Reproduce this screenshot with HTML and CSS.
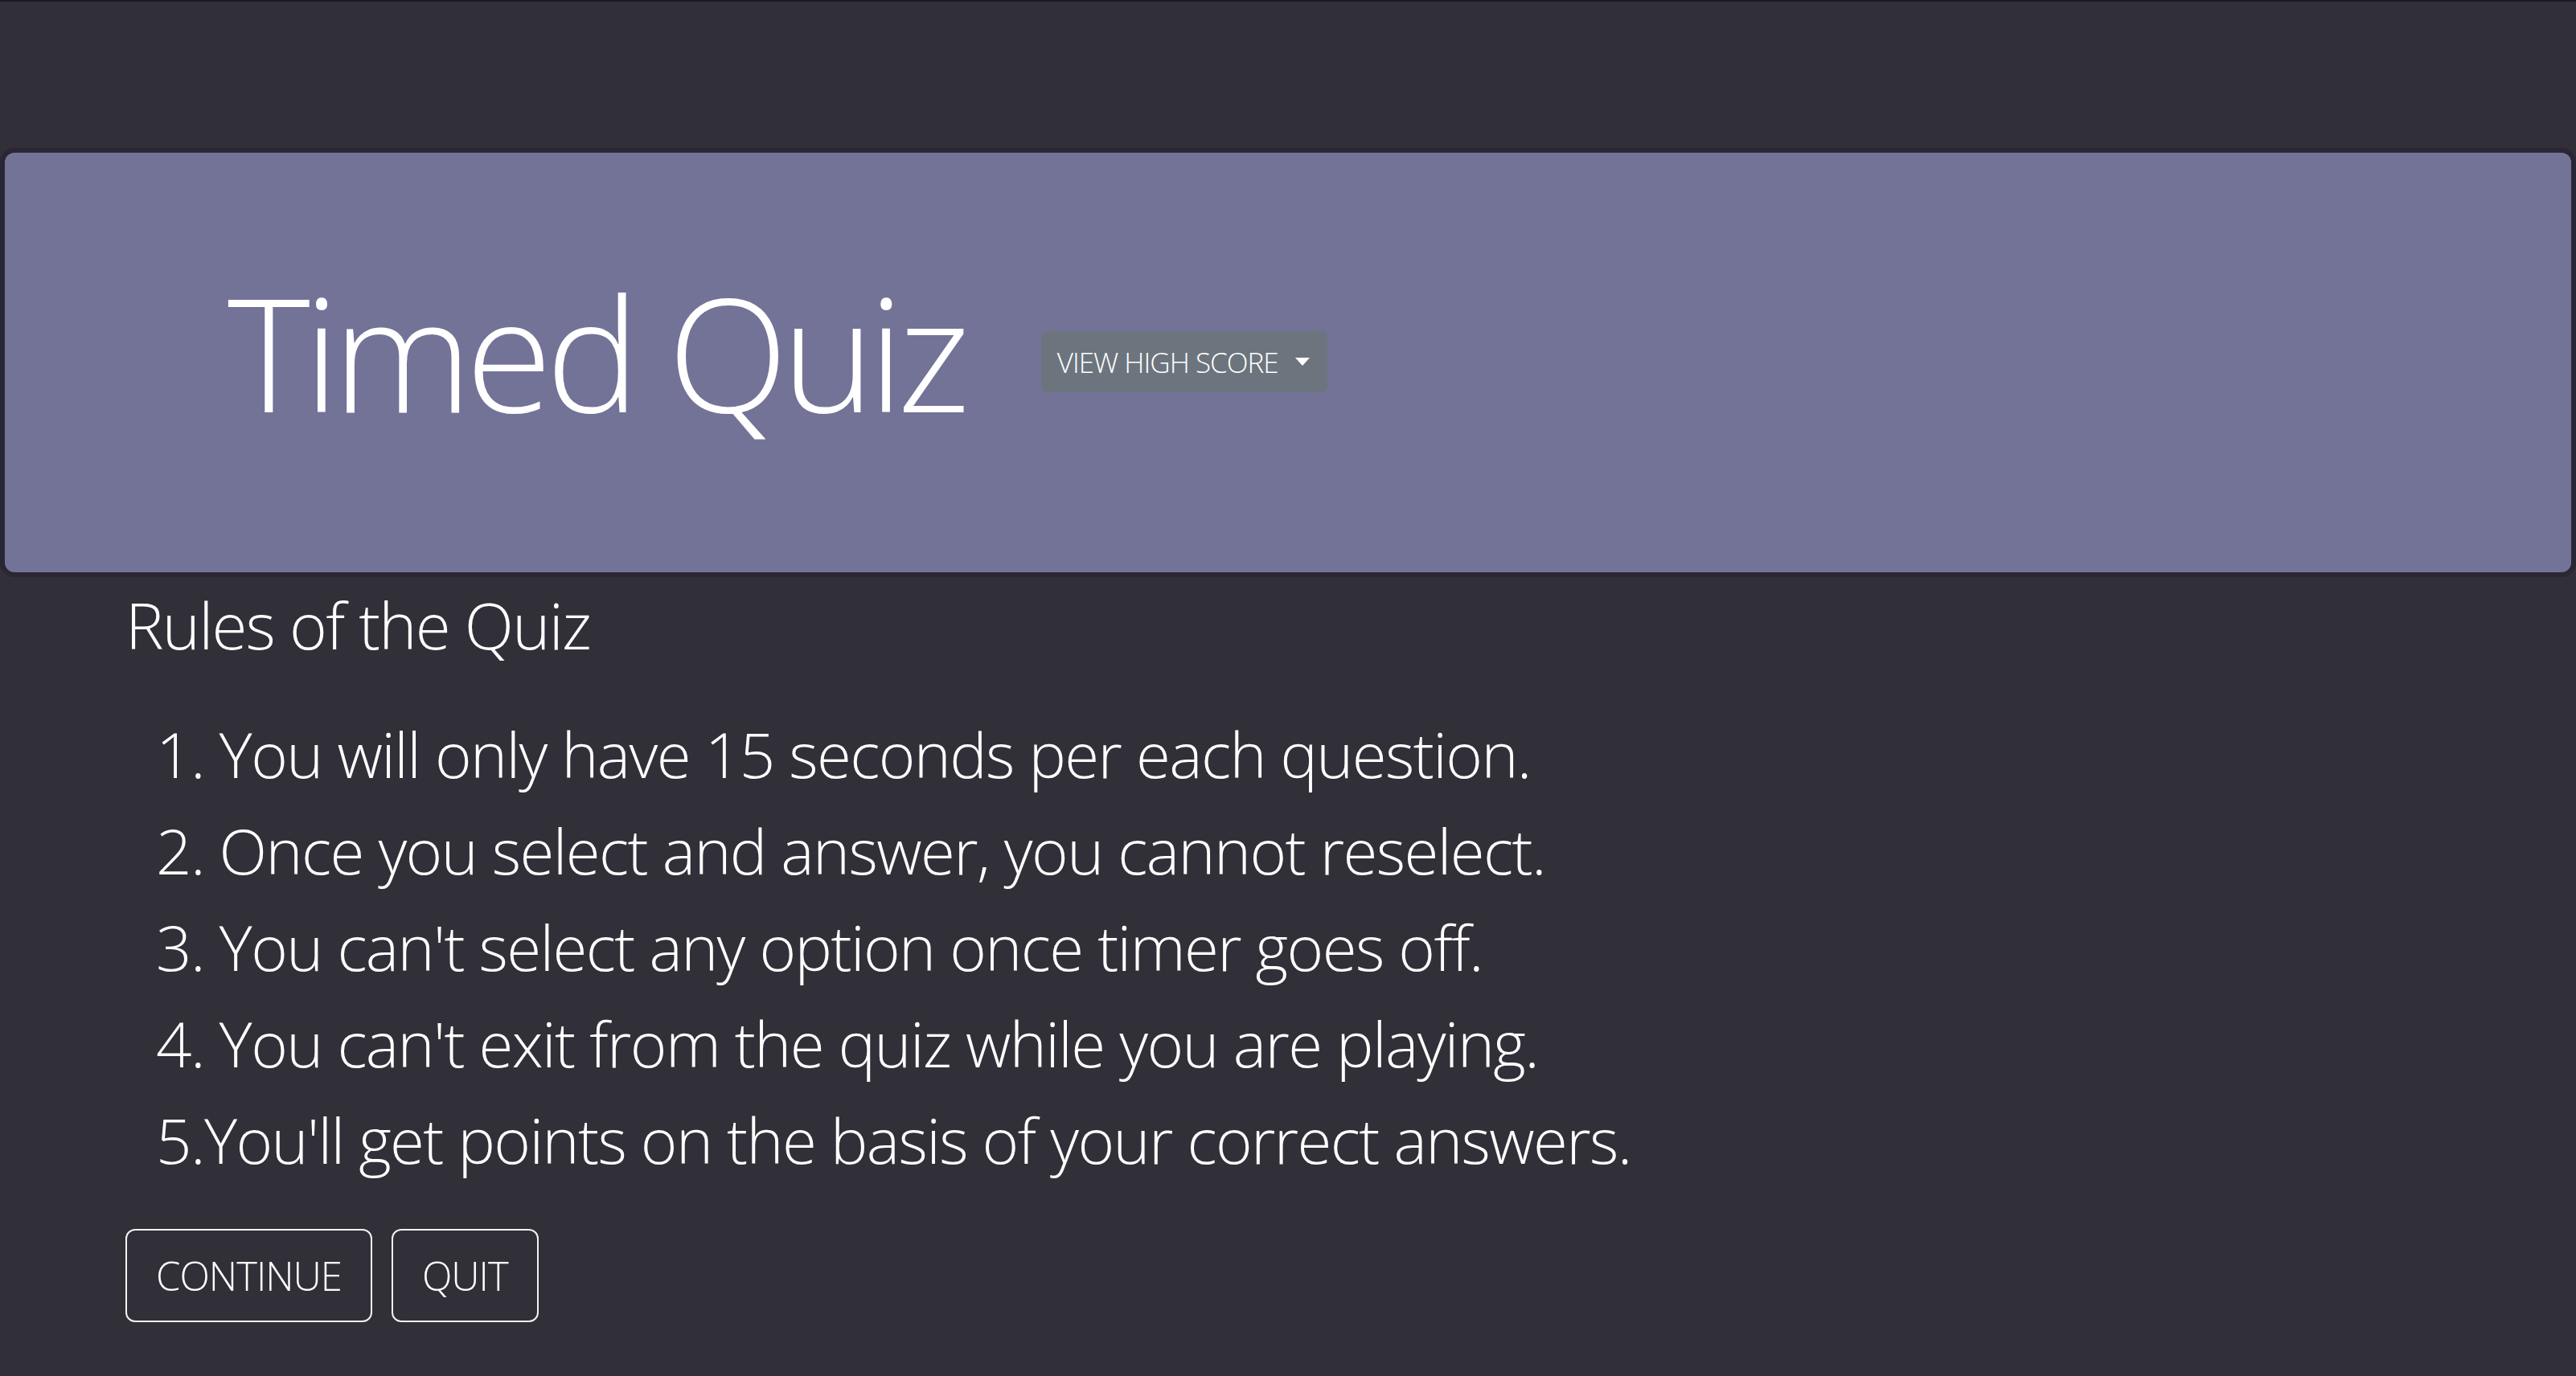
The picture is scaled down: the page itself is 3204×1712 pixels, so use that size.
FILE: index.html
```html
<!DOCTYPE html>
<html lang="en">
<head>
<meta charset="utf-8">
<title>Timed Quiz</title>
<link rel="stylesheet" href="styles.css">
</head>
<body>
<header class="jumbotron">
  <h1 class="title">Timed Quiz</h1>
  <button class="btn-score" type="button">VIEW HIGH SCORE<span class="caret"></span></button>
</header>
<main class="rules">
  <h2 class="rules-title">Rules of the Quiz</h2>
  <ul class="rules-list">
    <li>1. You will only have 15 seconds per each question.</li>
    <li>2. Once you select and answer, you cannot reselect.</li>
    <li>3. You can't select any option once timer goes off.</li>
    <li>4. You can't exit from the quiz while you are playing.</li>
    <li>5.You'll get points on the basis of your correct answers.</li>
  </ul>
  <div class="actions">
    <button class="btn-outline" type="button">CONTINUE</button>
    <button class="btn-outline" type="button">QUIT</button>
  </div>
</main>
</body>
</html>
```
FILE: styles.css
```css
html, body {
  margin: 0;
  padding: 0;
}
* {
  box-sizing: border-box;
}
body {
  background: #313038;
  border-top: 2px solid #1b1926;
  color: #ffffff;
  font-family: "Open Sans", "Lato", sans-serif;
  font-weight: 300;
  min-height: 1712px;
}
.jumbotron {
  margin: 182px 0 0 0;
  height: 534px;
  background: #737398;
  border: 6px solid #2b2636;
  border-radius: 18px;
  padding: 148px 0 0 277px;
  display: flex;
  align-items: flex-start;
}
.title {
  margin: 0;
  font-size: 196px;
  line-height: 198px;
  font-weight: 300;
  letter-spacing: -8px;
}
.btn-score {
  margin: 74px 0 0 96px;
  height: 76px;
  padding: 0 22px 0 20px;
  background: #6c757d;
  border: none;
  border-radius: 8px;
  color: #ffffff;
  font-family: inherit;
  font-weight: 300;
  font-size: 35px;
  display: flex;
  align-items: center;
  letter-spacing: -1px;
}
.caret {
  margin-left: 21px;
  width: 0;
  height: 0;
  border-left: 9px solid transparent;
  border-right: 9px solid transparent;
  border-top: 10px solid #ffffff;
}
.rules {
  padding: 11px 0 0 156px;
}
.rules-title {
  margin: 0;
  font-size: 80px;
  line-height: 96px;
  font-weight: 300;
  letter-spacing: -1.8px;
}
.rules-list {
  list-style: none;
  margin: 53px 0 0 0;
  padding: 0 0 0 38px;
  font-size: 78px;
  line-height: 120px;
  letter-spacing: -1.6px;
}
.actions {
  margin-top: 51px;
  display: flex;
  gap: 24px;
}
.btn-outline {
  height: 116px;
  padding: 0 36px;
  background: transparent;
  border: 2px solid #f2f2f2;
  border-radius: 12px;
  color: #ffffff;
  font-family: inherit;
  font-weight: 300;
  font-size: 49px;
  letter-spacing: -1px;
  display: flex;
  align-items: center;
}
```
